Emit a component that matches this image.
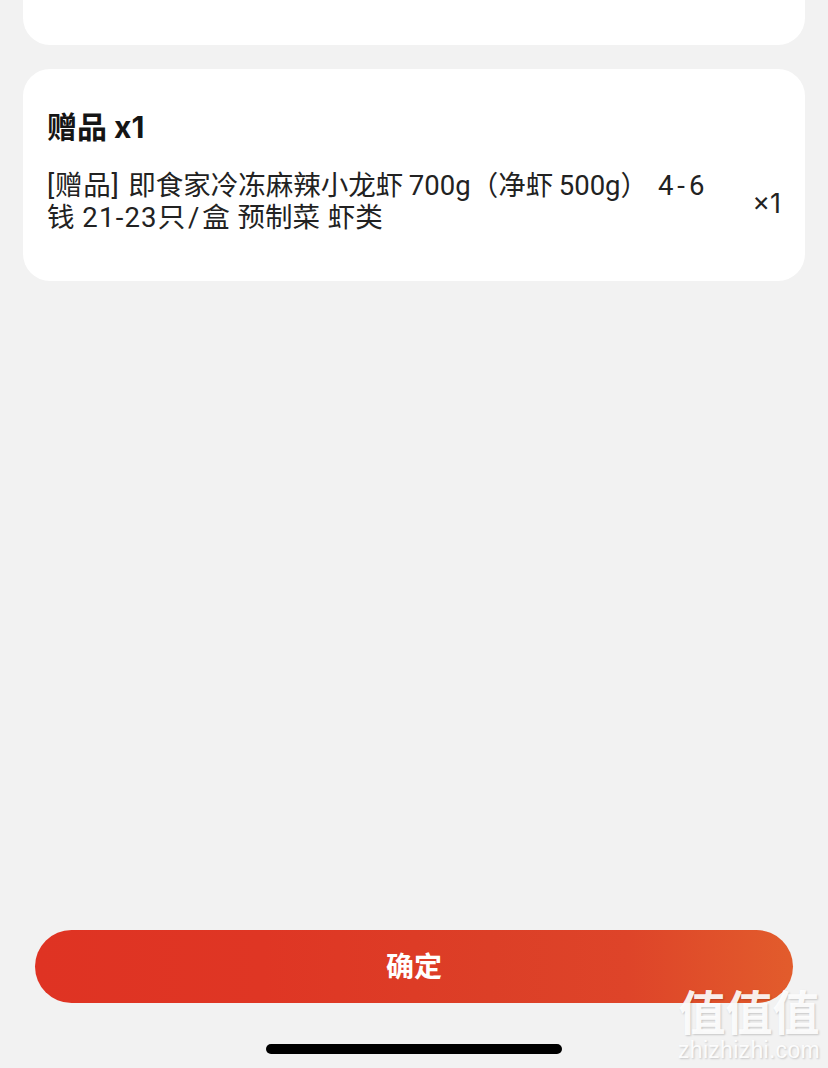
<div class="page">
  <section class="card top"></section>
  <section class="card gift">
    <h2>赠品 x1</h2>
    <div class="row">
      <p><span class="tag">[赠品]</span> 即食家冷冻麻辣小龙虾&#8201;700g（净虾&#8201;500g） <span class="keep">4-6</span> 钱 <span class="num">21-23</span>只&#8202;/&#8202;盒 预制菜 虾类</p>
      <span class="qty">×1</span>
    </div>
  </section>
  <div class="spacer"></div>
  <button class="confirm">确定</button>
  <div class="home"></div>
  <div class="mark" aria-hidden="true">
    <div class="zh">值值值</div>
    <div class="en">zhizhizhi.com</div>
  </div>
</div>

<style>
  :global(body) {
    margin: 0;
    background: #f2f2f2;
  }
  .page {
    position: relative;
    box-sizing: border-box;
    width: 828px;
    height: 1068px;
    overflow: hidden;
    display: flex;
    flex-direction: column;
    padding: 0 23px;
    background: #f2f2f2;
    font-family: Inter, "Noto Sans CJK SC", sans-serif;
    color: #1a1a1a;
  }
  .card {
    background: #fff;
    flex: none;
  }
  .top {
    height: 45px;
    border-radius: 0 0 27px 27px;
  }
  .gift {
    margin-top: 24px;
    height: 212px;
    box-sizing: border-box;
    padding: 39px 24px 0;
    border-radius: 27px;
  }
  h2 {
    margin: 0;
    font-size: 30px;
    line-height: 38px;
    font-weight: 700;
    color: #151515;
  }
  .row {
    display: flex;
    align-items: center;
    margin-top: 24px;
  }
  p {
    margin: 0;
    width: 668px;
    font-family: Roboto, "Noto Sans CJK SC", sans-serif;
    font-size: 27.5px;
    line-height: 32px;
    font-weight: 400;
    word-spacing: 1px;
    color: #222;
  }
  .tag {
    letter-spacing: 0.7px;
    margin-right: 1px;
  }
  .keep {
    white-space: nowrap;
    letter-spacing: 4px;
    margin-left: 2px;
  }
  .num {
    letter-spacing: 1.2px;
  }
  .qty {
    position: relative;
    top: 2px;
    margin-left: auto;
    font-size: 27px;
    line-height: 32px;
    color: #222;
  }
  .spacer {
    flex: 1;
  }
  .confirm {
    flex: none;
    align-self: center;
    width: 758px;
    height: 73px;
    border: 0;
    border-radius: 37px;
    background: linear-gradient(90deg, #df3323 0%, #df3624 30%, #dc3f27 60%, #de4429 78%, #e25c2c 100%);
    color: #fff;
    font: 700 28px/75px Inter, "Noto Sans CJK SC", sans-serif;
    padding: 0;
  }
  .home {
    flex: none;
    align-self: center;
    width: 296px;
    height: 10px;
    margin: 41px 0 14px;
    border-radius: 5px;
    background: #000;
  }
  .mark {
    position: absolute;
    left: 674px;
    top: 985px;
    width: 150px;
    text-align: center;
    color: rgba(255, 255, 255, 0.92);
    font-family: "Noto Sans CJK SC", sans-serif;
    text-shadow: 1px 1px 2px rgba(0, 0, 0, 0.18);
  }
  .zh {
    font-size: 47px;
    line-height: 50px;
    font-weight: 700;
  }
  .en {
    font-family: "Liberation Sans", sans-serif;
    font-size: 23px;
    line-height: 24px;
    margin-top: 3px;
    letter-spacing: 0.3px;
  }
</style>
